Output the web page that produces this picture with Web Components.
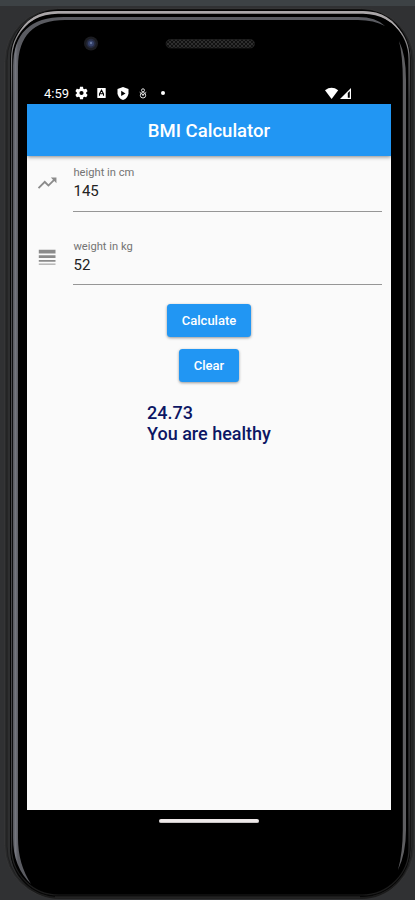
<!DOCTYPE html>
<html lang="en"><head><meta charset="utf-8"><title>BMI Calculator</title>
<style>html,body{margin:0;height:900px;overflow:hidden}body{font-family:Roboto,sans-serif;background:#303133}</style></head><body>
<phone-shell>
<status-bar slot="status"></status-bar>
<app-bar>BMI Calculator</app-bar>
<text-field-row label="height in cm" value="145" icon="trend"></text-field-row>
<text-field-row label="weight in kg" value="52" icon="weight"></text-field-row>
<button-stack><raised-button style="--w:84px">Calculate</raised-button><raised-button style="--w:60px">Clear</raised-button></button-stack>
<bmi-result><span>24.73</span><span slot="message">You are healthy</span></bmi-result>
</phone-shell>
<script>
function define(name, html){
  customElements.define(name, class extends HTMLElement{
    constructor(){super();this.attachShadow({mode:'open'}).innerHTML=html;}
  });
}
define('phone-shell', `<style>
:host{display:grid;grid-template-rows:80px 24px 706px 90px;width:415px;height:900px;position:relative}
.frame{position:absolute;inset:0}
.status{grid-row:2;position:relative;padding-left:44px}
.screen{grid-row:3;position:relative;margin:0 24px 0 27px;background:#fafafa;overflow:hidden}
.nav{grid-row:4;position:relative;display:flex;justify-content:center;align-items:flex-start;padding-top:9px;margin-left:3px}
.nav i{width:100px;height:4px;border-radius:2px;background:#eee9e9;box-sizing:border-box;border-bottom:1px solid #c8c4c4}
</style>
<svg class="frame" width="415" height="900" viewBox="0 0 415 900">
<defs>
<linearGradient id="hl" gradientUnits="userSpaceOnUse" x1="0" y1="10" x2="0" y2="900"><stop offset="0" stop-color="#a4a0a1"/><stop offset=".04" stop-color="#858486"/><stop offset=".1" stop-color="#505154"/><stop offset=".9" stop-color="#454548"/><stop offset=".97" stop-color="#1c1c1c"/></linearGradient>
<linearGradient id="left" gradientUnits="userSpaceOnUse" x1="12.5" y1="0" x2="18" y2="0"><stop offset="0" stop-color="#4d4e54"/><stop offset=".55" stop-color="#74767e"/><stop offset="1" stop-color="#5a5b61"/></linearGradient>
<pattern id="mesh" width="4" height="4" patternUnits="userSpaceOnUse"><rect width="4" height="4" fill="#111"/><path d="M0 0l4 4M4 0L0 4" stroke="#363636" stroke-width=".8"/></pattern>
</defs>
<rect width="415" height="900" fill="#303133"/><rect width="415" height="6" fill="#3d4245"/>
<rect x="4.5" y="8.5" width="410" height="890" rx="53" fill="#292a2b" stroke="#353536"/>
<rect x="7" y="9.5" width="405" height="888" rx="51" fill="#2e2f30" stroke="#1e1e1f"/>
<rect x="10.5" y="10" width="400" height="889" rx="49" fill="#1b1b1b"/>
<rect x="10.5" y="10" width="399.5" height="886.5" rx="48" fill="#000" stroke="#060606"/>
<rect x="11.6" y="12" width="397.5" height="883" rx="47" fill="none" stroke="url(#hl)" stroke-width="1.2"/>
<path d="M58 11H363Q391 11 403 36Q389 14 363 13.8H58Q31 14 17 36Q29 11 58 11z" fill="#aaa6a8"/>
<path d="M13 838V66Q13.5 17 64 17H358Q376 17 385 26Q374 20 358 20H65Q18 20 18 67V838Q18 864 31 884Q13 867 13 838z" fill="url(#left)"/>
<path d="M399 41Q406 55 406 80V830Q406 853 398 870Q402.8 852 402.8 830V80Q402.8 56 399 41" fill="#5e5e61"/>
<path d="M55 897.5H360" stroke="#222" stroke-width="2.5"/>
<circle cx="91" cy="43.5" r="7" fill="#1b1c21"/><circle cx="91" cy="43.5" r="4.7" fill="#252a3f"/><circle cx="91" cy="43.5" r="3" fill="#344069"/><circle cx="91" cy="43" r="1.2" fill="#66769e"/>
<rect x="166" y="39.5" width="88.5" height="8.5" rx="4.2" fill="url(#mesh)" stroke="#222" stroke-width=".7"/>
</svg>
<div class="status"><slot name="status"></slot></div><div class="screen"><slot></slot></div><div class="nav"><i></i></div>`);

define('status-bar', `<style>
:host{display:flex;height:24px;padding-top:2px;box-sizing:border-box;align-items:center;color:#fff;font-size:13px}
span{width:31px;white-space:nowrap}svg{display:block}
.gear{margin-right:9px}.a{margin-right:11px}.shield{margin-right:10px}.debug{margin-right:14px}.dot{width:4px;height:4px;border-radius:50%;background:#fff;margin-right:160px}
</style><span>4:59</span>
<svg class="gear" width="13" height="14" viewBox="2 1.5 20 21" fill="#fff"><path fill-rule="evenodd" d="M19.14 12.94c.04-.3.06-.61.06-.94s-.02-.64-.07-.94l2.03-1.58c.18-.14.23-.41.12-.61l-1.92-3.32c-.12-.22-.37-.29-.59-.22l-2.39.96c-.5-.38-1.03-.7-1.62-.94l-.36-2.54c-.04-.24-.24-.41-.48-.41h-3.84c-.24 0-.43.17-.47.41l-.36 2.54c-.59.24-1.13.57-1.62.94l-2.39-.96c-.22-.08-.47 0-.59.22L2.74 8.87c-.12.21-.08.47.12.61l2.03 1.58c-.05.3-.09.63-.09.94s.02.64.07.94l-2.03 1.58c-.18.14-.23.41-.12.61l1.92 3.32c.12.22.37.29.59.22l2.39-.96c.5.38 1.03.7 1.62.94l.36 2.54c.05.24.24.41.48.41h3.84c.24 0 .44-.17.47-.41l.36-2.54c.59-.24 1.13-.56 1.62-.94l2.39.96c.22.08.47 0 .59-.22l1.92-3.32c.12-.22.07-.47-.12-.61zM12 15.2a3.2 3.2 0 1 1 0-6.4 3.2 3.2 0 0 1 0 6.4z"/></svg>
<svg class="a" width="9" height="10" viewBox="0 0 9 10"><rect x=".3" width="8.4" height="10" rx=".6" fill="#fff"/><path d="M2.5 7.7V6L4.5 2.2 6.5 6v1.7M3.3 5.8h2.5" fill="none" stroke="#000" stroke-width="1.1"/></svg>
<svg class="shield" width="12" height="13" viewBox="0 0 12 13"><path d="M6 0L11.5 2V6.2Q11.2 11 6 13Q.8 11 .5 6.2V2z" fill="#fff"/><path d="M4.2 3.7v5.3l4.3-2.6z" fill="#000"/></svg>
<svg class="debug" width="8" height="11" viewBox="0 0 8 11" fill="none" stroke="#ddd" stroke-width="1"><circle cx="4" cy="2.3" r="1.5"/><circle cx="4" cy="7.3" r="2.7"/><path d="M.7 4.2L4 7 7.3 4.2M4 6v2"/></svg>
<i class="dot"></i>
<svg width="27" height="13" viewBox="0 0 27 13"><path d="M0 3.2Q6.5-1.5 13.2 3.2L6.6 12z" fill="#fff"/><path d="M15 12L26 1V12z" fill="#fff"/><path d="M22.8 6L24.8 4V10.8H22.8z" fill="#000"/></svg>`);

define('app-bar', `<style>:host{display:flex;height:52px;align-items:center;justify-content:center;background:#2196f3;color:#fff;font-size:18.55px;font-weight:500;box-shadow:0 1px 4px #0007;padding-top:1px;box-sizing:border-box;position:relative}</style><slot></slot>`);

customElements.define('text-field-row', class extends HTMLElement{
  connectedCallback(){
    const icon=this.getAttribute('icon')==='trend'
      ?'<path d="M16 6l2.29 2.29-4.88 4.88-4-4L2 16.59 3.41 18l6-6 4 4 6.3-6.29L22 12V6z"/>'
      :'<path d="M3 17h18v-2H3zm0-4h18v-3H3zm0-9v4h18V4z"/><path d="M3 19h18v1H3z"/>';
    this.attachShadow({mode:'open'}).innerHTML=`<style>
:host{display:flex;height:55.5px;margin-bottom:18px;padding:0 9px 0 9px}
svg{width:22.3px;height:22.3px;margin-top:16.2px;fill:#8b8b8b;flex:none}
.field{flex:1;margin-left:15.2px;border-bottom:1px solid #969696;padding-top:9px;box-sizing:border-box}
label{display:block;font-size:11.15px;line-height:16px;color:#747474}
.value{font-size:15px;line-height:20px;color:#222}
</style><svg viewBox="0 0 24 24">${icon}</svg><div class="field"><label>${this.getAttribute('label')}</label><div class="value">${this.getAttribute('value')}</div></div>`;
  }
});
define('button-stack', `<style>:host{display:flex;flex-direction:column;align-items:center;gap:11.5px;padding-top:1px}</style><slot></slot>`);
define('raised-button', `<style>:host{display:flex;width:var(--w);height:33px;align-items:center;justify-content:center;background:#2196f3;color:#fff;border-radius:3.5px;font-size:13px;font-weight:500;box-shadow:0 1px 3px #0006}</style><slot></slot>`);
define('bmi-result', `<style>:host{display:grid;width:max-content;margin:20px auto 0;font-size:18px;line-height:21.5px;font-weight:500;color:#0c1664}</style><slot></slot><slot name="message"></slot>`);
</script></body></html>
